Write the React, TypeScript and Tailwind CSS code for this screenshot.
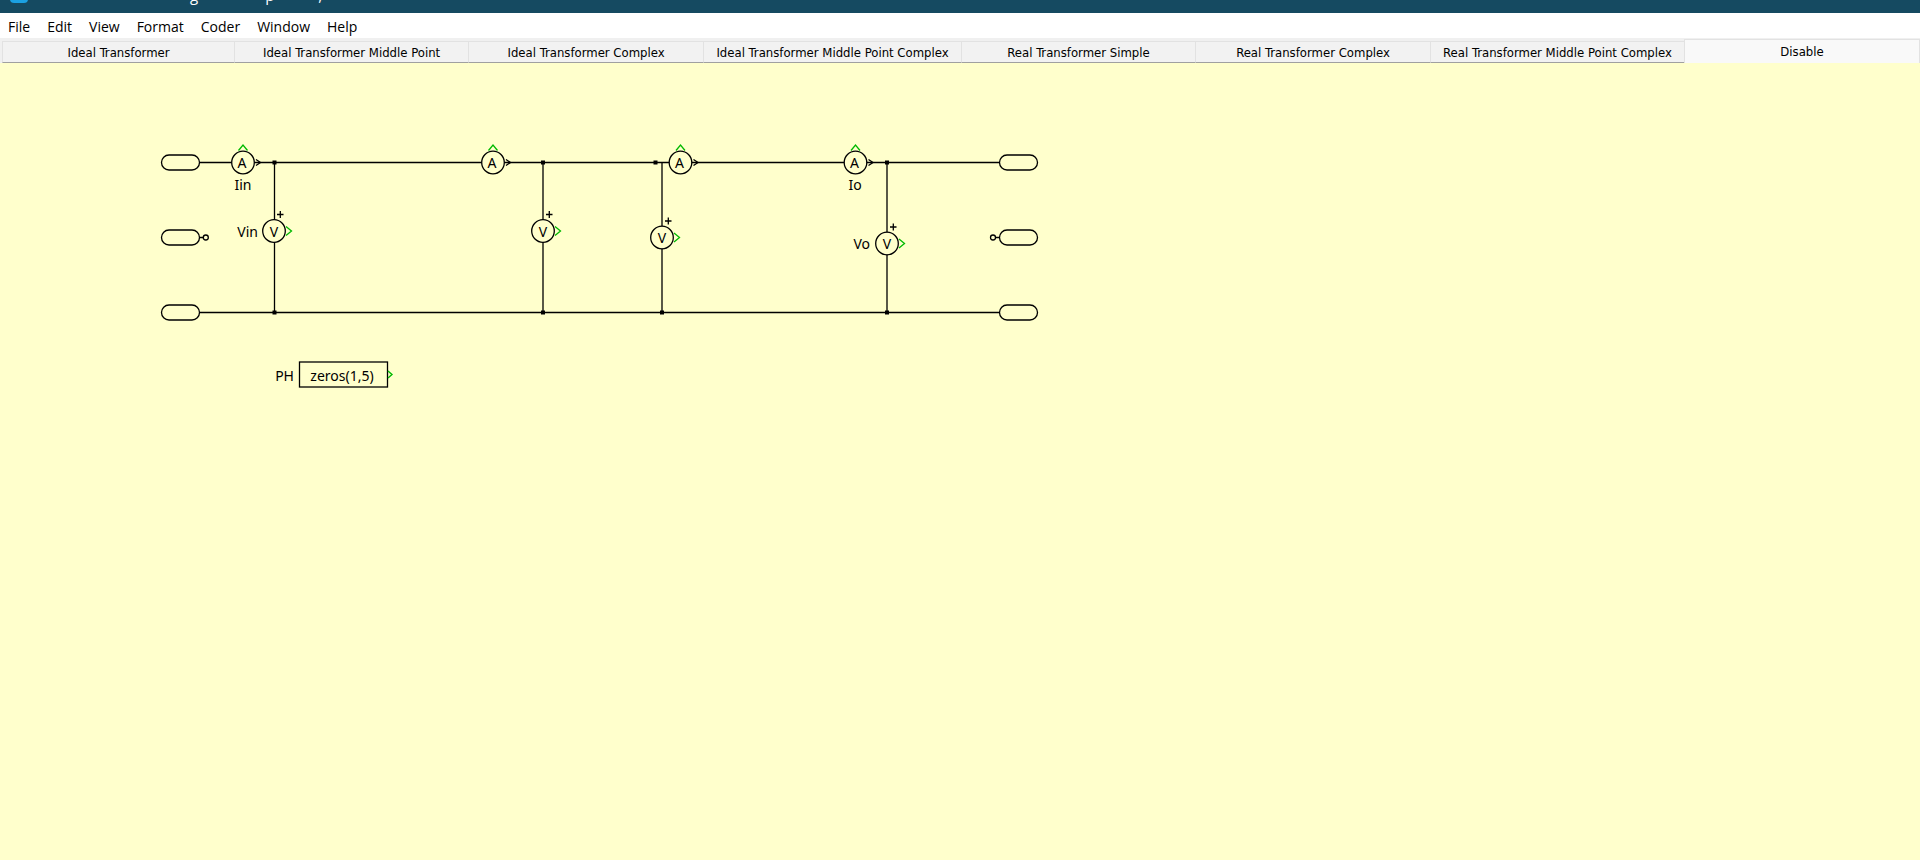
import React from "react";

const MENUS = ["File", "Edit", "View", "Format", "Coder", "Window", "Help"];

const TABS = [
  { label: "Ideal Transformer", grow: "flex-[232]" },
  { label: "Ideal Transformer Middle Point", grow: "flex-[234]" },
  { label: "Ideal Transformer Complex", grow: "flex-[235]" },
  { label: "Ideal Transformer Middle Point Complex", grow: "flex-[258]" },
  { label: "Real Transformer Simple", grow: "flex-[234]" },
  { label: "Real Transformer Complex", grow: "flex-[235]" },
  { label: "Real Transformer Middle Point Complex", grow: "flex-[254]" },
  { label: "Disable", grow: "flex-[235]" },
];

function Port({ x, y }: { x: number; y: number }) {
  return <rect x={x} y={y - 7.5} width="38" height="15" rx="7.5" fill="none" stroke="#000" strokeWidth="1.3" />;
}

function Ammeter({ x, y }: { x: number; y: number }) {
  return (
    <g fill="none" strokeWidth="1.3">
      <path d={`M${x - 4.5} ${y - 12}L${x} ${y - 17.5}L${x + 4.5} ${y - 12}`} stroke="#00b900" />
      <circle cx={x} cy={y} r="11.3" fill="#ffffcc" stroke="#000" />
      <path d={`M${x + 13} ${y - 3}L${x + 17.5} ${y}L${x + 13} ${y + 3}`} stroke="#000" />
      <text x={x - 1} y={y + 5.5} textAnchor="middle" fill="#000" stroke="none">A</text>
    </g>
  );
}

function Voltmeter({ x, y }: { x: number; y: number }) {
  return (
    <g fill="none" strokeWidth="1.3">
      <path d={`M${x + 12} ${y - 4.5}L${x + 17.5} ${y}L${x + 12} ${y + 4.5}`} stroke="#00b900" />
      <path d={`M${x + 3} ${y - 16.5}h6.5M${x + 6.3} ${y - 20}v7`} stroke="#000" />
      <circle cx={x} cy={y} r="11.3" fill="#ffffcc" stroke="#000" />
      <text x={x} y={y + 5.5} textAnchor="middle" fill="#000" stroke="none">V</text>
    </g>
  );
}

function Schematic() {
  const nodes = [
    [274.5, 162.5], [543, 162.5], [655.5, 162.5], [887, 162.5],
    [274.5, 312.5], [543, 312.5], [662, 312.5], [887, 312.5],
  ];
  return (
    <svg
      role="img"
      aria-label="Transformer schematic"
      viewBox="0 63 1100 340"
      className="block h-[340px] w-[1100px] text-sm font-['Noto_Sans','Open_Sans',sans-serif]"
    >
      <path
        d="M200 162.5H999M200 312.5H999M274.5 162.5V312.5M543 162.5V312.5M662 162.5V312.5M887 162.5V312.5"
        fill="none"
        stroke="#000"
        strokeWidth="1.3"
      />
      {nodes.map(([x, y]) => (
        <rect key={`${x}-${y}`} x={x - 2} y={y - 2} width="4" height="4" />
      ))}
      {[162.5, 237.5, 312.5].map((y) => (
        <g key={y}>
          <Port x={161.5} y={y} />
          <Port x={999.5} y={y} />
        </g>
      ))}
      <g fill="none" stroke="#000" strokeWidth="1.3">
        <path d="M199.5 237.5h4M995.5 237.5h4" />
        <circle cx="205.8" cy="237.5" r="2.5" />
        <circle cx="993" cy="237.5" r="2.5" />
      </g>
      {[243, 493, 680.5, 855.5].map((x) => (
        <Ammeter key={x} x={x} y={162.5} />
      ))}
      <Voltmeter x={274} y={231} />
      <Voltmeter x={543} y={231} />
      <Voltmeter x={662} y={237.5} />
      <Voltmeter x={887} y={243.5} />
      <text x="243" y="190" textAnchor="middle">Iin</text>
      <text x="855" y="190" textAnchor="middle">Io</text>
      <text x="258" y="237" textAnchor="end">Vin</text>
      <text x="870" y="249" textAnchor="end">Vo</text>
      <text x="294" y="381" textAnchor="end">PH</text>
      <rect x="299.5" y="362" width="88" height="25" fill="none" stroke="#000" strokeWidth="1.3" />
      <text x="342" y="381" textAnchor="middle">zeros(1,5)</text>
      <path d="M388 371L392 374.5L388 378" fill="none" stroke="#00b900" strokeWidth="1.4" />
    </svg>
  );
}

export default function App() {
  const [active, setActive] = React.useState(TABS.length - 1);
  return (
    <div className="flex min-h-screen flex-col bg-[#ffffcc] text-black">
      <header className="flex h-[13px] shrink-0 items-end overflow-hidden bg-[#154a61] px-[10px] pb-[10px] text-[15px] leading-4 text-white font-['Open_Sans','Noto_Sans',sans-serif]">
        <span className="h-4 w-[18px] shrink-0 rounded-sm bg-[#1ba1e2]" />
        <span className="ml-[162px]">g</span>
        <span className="ml-[67px]">p</span>
        <span className="ml-[44px]">,</span>
      </header>
      <nav
        aria-label="Menu"
        className="flex h-[25px] shrink-0 items-center gap-[17px] bg-white px-2 pt-0.5 text-sm font-['Open_Sans','Noto_Sans',sans-serif]"
      >
        {MENUS.map((m) => (
          <button key={m} type="button">{m}</button>
        ))}
      </nav>
      <div
        role="tablist"
        className="flex h-[25px] shrink-0 items-end bg-[#f0f0f0] pl-0.5 text-[13px] font-['DejaVu_Sans_Condensed','DejaVu_Sans',sans-serif]"
      >
        {TABS.map((t, i) => (
          <button
            key={t.label}
            type="button"
            role="tab"
            aria-selected={i === active}
            onClick={() => setActive(i)}
            className={`${t.grow} min-w-0 truncate border-t border-l border-[#e2e2e2] text-center ${
              i === active ? "h-6 border-r bg-[#f9f9f9]" : "h-[22px] border-b border-b-[#a0a0a0] bg-[#f2f2f2] pt-px"
            }`}
          >
            {t.label}
          </button>
        ))}
      </div>
      <main className="grow overflow-hidden">
        <Schematic />
      </main>
    </div>
  );
}
